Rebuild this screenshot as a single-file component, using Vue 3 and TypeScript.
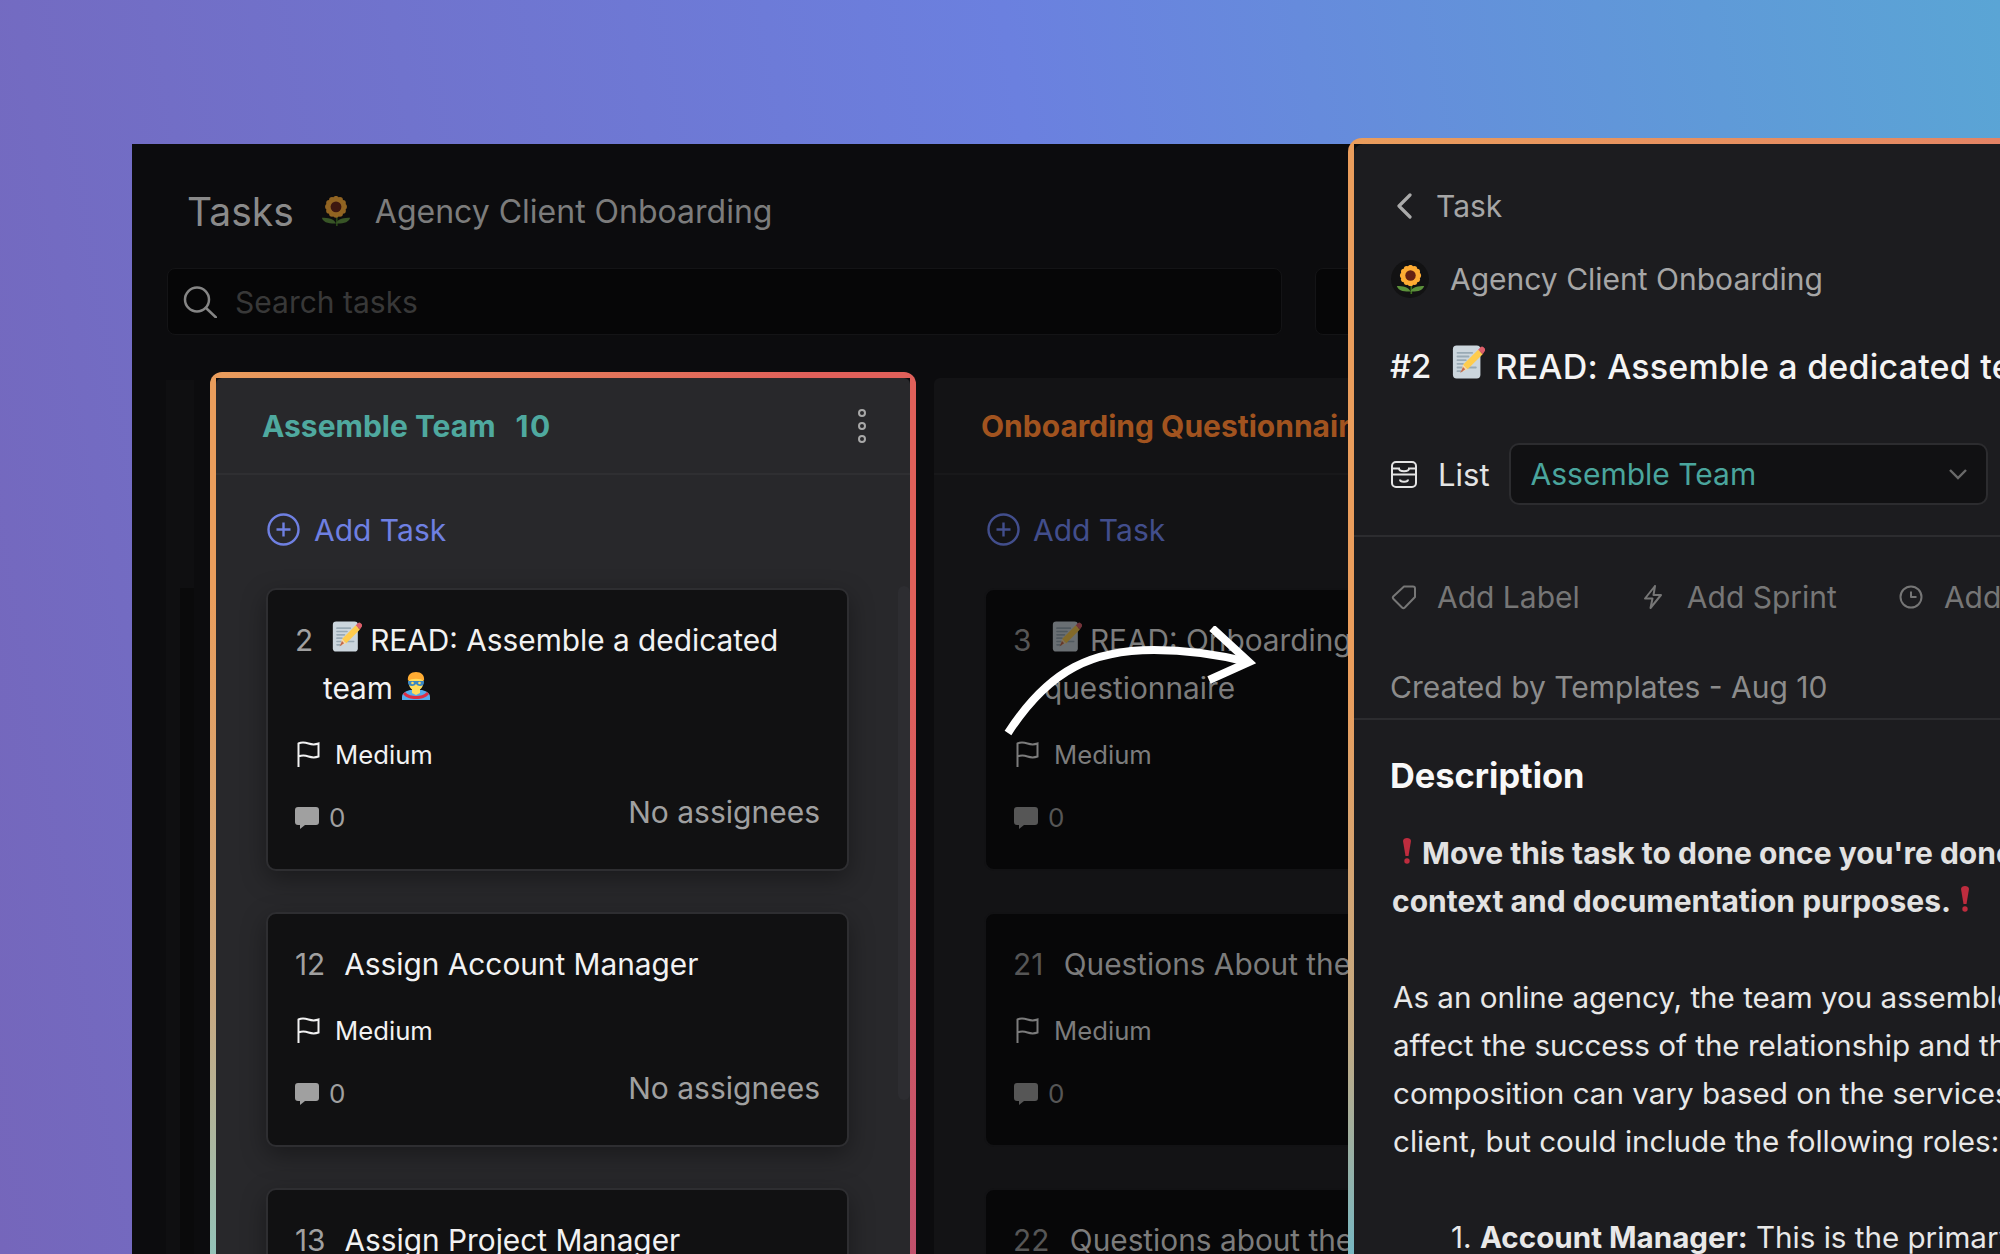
<template>
  <div class="page">
    <svg class="sprite" aria-hidden="true">
      <symbol id="memo" viewBox="0 0 36 36">
        <path fill="#ccd6dd" d="M31 32a4 4 0 0 1-4 4H5a4 4 0 0 1-4-4V4a4 4 0 0 1 4-4h22a4 4 0 0 1 4 4z" />
        <path
          fill="none"
          stroke="#99aab5"
          stroke-width="2"
          stroke-linecap="round"
          d="M6 8h16M6 12h12M6 16h9M6 20h6M6 24h20M6 28h5"
        />
        <path fill="#ffcc4d" d="M12 21 28.500 4.500l5 5L17 26z" />
        <path fill="#dd5f6a" d="M28.500 4.500 31 2a2.500 2.500 0 0 1 3.500 0l1 1a2.500 2.500 0 0 1 0 3.500l-2 3z" />
        <path fill="#ffd9a0" d="m12 21 5 5-7 3z" />
        <path fill="#c1694f" d="m12 23.500 2.500 2.500L9 30z" />
      </symbol>
      <symbol id="hero" viewBox="0 0 30 28">
        <path fill="#55acee" d="M1 28v-3c0-4 4-6 8-7h12c4 1 8 3 8 7v3z" />
        <path fill="#dd2e44" d="M4 20c3 3 7 4 11 4s8-1 11-4l2 2c-3 4-8 5-13 5S5 26 2 22z" />
        <path fill="#ffdc5d" d="M11 15h8v6l-4 2-4-2z" />
        <path fill="#ffdc5d" d="M8 8c0-5 14-5 14 0v4c0 4-4 7-7 7s-7-3-7-7z" />
        <path fill="#ffac33" d="M7 9c-1-6 3-9 8-9s9 3 8 9c-3-3-13-3-16 0z" />
        <path fill="#3b88c3" d="M7 9h16v2c0 2-2 3-4 3-2 0-3-1-4-2-1 1-2 2-4 2-2 0-4-1-4-3z" />
        <circle cx="11.500" cy="11" r="1.300" fill="#ffdc5d" />
        <circle cx="18.500" cy="11" r="1.300" fill="#ffdc5d" />
      </symbol>
      <symbol id="sunflower" viewBox="0 0 36 36">
        <path fill="#3e721d" d="M18 24h2v12h-2z" />
        <path fill="#5c913b" d="M18 33C12 33 3 33 1 26c7 0 15 1 17 7zm0 0c6 0 15 0 17-7-7 0-15 1-17 7z" />
        <circle v-for="p in petals" :key="p.x" :cx="p.x" :cy="p.y" r="3.600" fill="#ffac33" />
        <circle cx="18" cy="13" r="9" fill="#ffac33" />
        <circle cx="18" cy="13" r="6.500" fill="#662113" />
      </symbol>
      <symbol id="bang" viewBox="0 0 10 26">
        <path fill="#be2c3e" d="M1 3c0-4 8-4 8 0L6.500 18h-3z" />
        <circle cx="5" cy="23" r="2.700" fill="#be2c3e" />
      </symbol>
    </svg>

    <div class="window">
      <header class="head">
        <span class="head-title">Tasks</span>
        <svg class="head-flower"><use href="#sunflower" /></svg>
        <span class="head-project">Agency Client Onboarding</span>
      </header>

      <div class="search-row">
        <div class="search">
          <svg width="34" height="32" viewBox="0 0 34 32" fill="none" stroke="#858585" stroke-width="2.500">
            <circle cx="14" cy="13.500" r="12" />
            <path d="m23 22 10 9.500" stroke-linecap="round" />
          </svg>
          <span>Search tasks</span>
        </div>
        <div class="filter"></div>
      </div>

      <div class="board">
        <div class="stub"><div class="stub-card"></div></div>

        <section
          v-for="col in columns"
          :key="col.name"
          class="column"
          :class="{ active: col.active, dim: !col.active }"
        >
          <div class="column-inner">
            <div class="column-head">
              <span class="column-name">{{ col.name }}</span>
              <span v-if="col.count" class="column-count">{{ col.count }}</span>
              <svg v-if="col.active" class="kebab" width="10" height="36" viewBox="0 0 10 36">
                <circle cx="5" cy="5" r="3" />
                <circle cx="5" cy="18" r="3" />
                <circle cx="5" cy="31" r="3" />
              </svg>
            </div>

            <div class="add-task">
              <svg width="33" height="33" viewBox="0 0 33 33" fill="none" stroke="currentColor" stroke-width="2.400">
                <circle cx="16.500" cy="16.500" r="15" />
                <path d="M16.500 9.500v14M9.500 16.500h14" />
              </svg>
              <span>Add Task</span>
            </div>

            <article v-for="task in col.tasks" :key="task.id" class="card">
              <div class="card-title">
                <span class="card-num">{{ task.id }}</span>
                <svg v-if="task.memo" class="memo"><use href="#memo" /></svg>
                <span>{{ task.title }}</span>
                <svg v-if="task.hero" class="hero"><use href="#hero" /></svg>
              </div>
              <div class="card-priority">
                <svg width="23" height="26" viewBox="0 0 23 26" fill="none" stroke="currentColor" stroke-width="2">
                  <path d="M1.500 26V2.500c4-2 7-1 10 0s6 1.500 10 0v13c-4 1.500-7 1-10 0s-6-1.500-10 0" />
                </svg>
                <span>Medium</span>
              </div>
              <div class="card-foot">
                <svg width="24" height="22" viewBox="0 0 24 22" fill="currentColor">
                  <path d="M3 0h18a3 3 0 0 1 3 3v12a3 3 0 0 1-3 3H10l-5 4v-4H3a3 3 0 0 1-3-3V3a3 3 0 0 1 3-3z" />
                </svg>
                <span class="card-count">0</span>
                <span class="card-assignee">No assignees</span>
              </div>
            </article>
          </div>
          <div v-if="col.active" class="scroll-track"></div>
        </section>
      </div>
    </div>

    <svg class="arrow" width="270" height="130" viewBox="0 0 270 130" fill="none" stroke="#fff" stroke-width="8">
      <path d="M10 107C52 42 96 24 156 24c32 0 62 4 94 12" />
      <path d="M214 2l37 34-40 18" />
    </svg>

    <aside class="panel">
      <div class="panel-inner">
        <div class="back">
          <svg width="16" height="26" viewBox="0 0 16 26" fill="none" stroke="#aaa" stroke-width="3.200" stroke-linecap="round" stroke-linejoin="round">
            <path d="M14 2 3 13l11 11" />
          </svg>
          <span>Task</span>
        </div>
        <div class="project">
          <span class="project-badge"><svg><use href="#sunflower" /></svg></span>
          <span>Agency Client Onboarding</span>
        </div>
        <h1 class="panel-title">
          <span class="panel-num">#2</span>
          <svg class="panel-memo"><use href="#memo" /></svg>
          <span class="panel-name">READ: Assemble a dedicated team</span>
        </h1>
        <div class="list-row">
          <svg width="26" height="27" viewBox="0 0 26 27" fill="none" stroke="#e4e4e4" stroke-width="2">
            <rect x="1" y="1" width="24" height="25" rx="4" />
            <path d="M1 13.500h24M1 7.500h7c0 3.500 10 3.500 10 0h7M9 18.500c0 3 8 3 8 0" />
          </svg>
          <span class="list-label">List</span>
          <div class="select">
            <span>Assemble Team</span>
            <svg width="18" height="11" viewBox="0 0 18 11" fill="none" stroke="#6a6a6a" stroke-width="2.400">
              <path d="m1 1 8 8 8-8" />
            </svg>
          </div>
        </div>

        <div class="attrs">
          <div v-for="attr in attrs" :key="attr.label" class="attr">
            <svg width="26" height="26" viewBox="0 0 26 26" fill="none" stroke="#767676" stroke-width="2" stroke-linejoin="round">
              <path :d="attr.icon" />
            </svg>
            <span>{{ attr.label }}</span>
          </div>
        </div>

        <div class="created">Created by Templates - Aug 10</div>

        <div class="description">
          <h2>Description</h2>
          <p class="strong">
            <svg class="bang first"><use href="#bang" /></svg>Move this task to done once you're done reading it<br />
            context and documentation purposes.<svg class="bang last"><use href="#bang" /></svg>
          </p>
          <p v-for="line in bodyLines" :key="line" class="line">{{ line }}</p>
          <p class="line item">1. <b>Account Manager:</b> This is the primary point of contact</p>
        </div>
      </div>
    </aside>
  </div>
</template>

<script setup lang="ts">
interface Task {
  id: number
  title: string
  memo?: boolean
  hero?: boolean
}

interface Column {
  name: string
  count?: number
  active?: boolean
  tasks: Task[]
}

const petals = Array.from({ length: 12 }, (_, i) => {
  const a = (i / 12) * Math.PI * 2
  return { x: 18 + Math.cos(a) * 9.5, y: 13 + Math.sin(a) * 9.5 }
})

const columns: Column[] = [
  {
    name: 'Assemble Team',
    count: 10,
    active: true,
    tasks: [
      { id: 2, title: 'READ: Assemble a dedicated team', memo: true, hero: true },
      { id: 12, title: 'Assign Account Manager' },
      { id: 13, title: 'Assign Project Manager' },
    ],
  },
  {
    name: 'Onboarding Questionnaire',
    tasks: [
      { id: 3, title: 'READ: Onboarding questionnaire', memo: true },
      { id: 21, title: 'Questions About the Client' },
      { id: 22, title: 'Questions about the Project' },
    ],
  },
]

const attrs = [
  {
    label: 'Add Label',
    icon: 'M13 2.500h9a2 2 0 0 1 2 2V13L13.800 23.500a2 2 0 0 1-2.800 0l-8.500-8.500a2 2 0 0 1 0-2.800zM19.500 6.500v.1',
  },
  { label: 'Add Sprint', icon: 'M14 2 4 14.500h7.500L9.500 24 20 11h-7.500z' },
  { label: 'Add Date', icon: 'M13 2.500a10.500 10.500 0 1 0 0 21 10.500 10.500 0 0 0 0-21zM13 7.500V13h5.500' },
]

const bodyLines = [
  'As an online agency, the team you assemble for each',
  'affect the success of the relationship and the project',
  'composition can vary based on the services you offer',
  'client, but could include the following roles:',
]
</script>

<style>
html,
body {
  margin: 0;
  overflow: hidden;
}
</style>

<style scoped>
.page {
  position: relative;
  box-sizing: border-box;
  width: 2000px;
  height: 1254px;
  padding: 144px 0 0 132px;
  overflow: hidden;
  background: linear-gradient(80deg, #7566bb 0%, #6b80df 55%, #5aa5d5 100%);
  font-family: Inter, "Liberation Sans", sans-serif;
}

.sprite {
  display: none;
}

.window {
  height: 100%;
  overflow: hidden;
  background: #0c0c0e;
}

.head {
  display: flex;
  align-items: center;
  height: 44px;
  padding: 45px 0 2px 55px;
}

.head-title {
  font-size: 39px;
  color: #8a8a8a;
}

.head-flower {
  width: 30px;
  height: 30px;
  margin: 0 24px 0 27px;
  opacity: 0.55;
}

.head-project {
  font-size: 32px;
  color: #7c7c7c;
}

.search-row {
  display: flex;
  gap: 33px;
  margin: 33px 0 0 35px;
}

.search {
  display: flex;
  flex: 0 0 1115px;
  box-sizing: border-box;
  align-items: center;
  gap: 18px;
  height: 67px;
  padding-left: 15px;
  border: 1px solid #141416;
  border-radius: 8px;
  background: #060607;
  font-size: 30px;
  color: #383838;
}

.filter {
  flex: 0 0 300px;
  box-sizing: border-box;
  border: 1px solid #141416;
  border-radius: 8px;
  background: #060607;
}

.board {
  display: flex;
  gap: 12px;
  height: 900px;
  margin: 37px 0 0 34px;
}

.stub {
  flex: 0 0 28px;
  margin: 8px 4px 0 0;
  background: #0f0f11;
}

.stub-card {
  width: 14px;
  height: 800px;
  margin: 208px 0 0 14px;
  background: #0a0a0b;
}

.column {
  --col-bg: #131315;
  --card-bg: #070708;
  --card-line: #121214;
  --title: #7c7c7c;
  --muted: #565656;
  --blue: #424e8c;
  position: relative;
  flex: 0 0 706px;
  box-sizing: border-box;
  padding: 6px;
  border-radius: 12px;
}

.column.active {
  --col-bg: #28282b;
  --card-bg: #111112;
  --card-line: #2e2e31;
  --title: #f2f2f2;
  --muted: #a0a0a0;
  --blue: #6f80e2;
  background:
    linear-gradient(90deg, #e99d5c, #e0605a 85%) top / 100% 6px no-repeat,
    linear-gradient(180deg, #e99d5c 25%, #c8a880 70%, #90c4bc 100%) left / 6px 100% no-repeat,
    linear-gradient(180deg, #e0605a 30%, #c0506c 100%) right / 6px 100% no-repeat;
}

.column-inner {
  height: 100%;
  padding-right: 61px;
  border-radius: 6px;
  background: var(--col-bg);
}

.column-head {
  display: flex;
  align-items: center;
  gap: 20px;
  height: 95px;
  padding-left: 46px;
  margin-right: -61px;
  border-bottom: 2px solid #2f2f32;
  font-size: 30px;
  font-weight: 700;
  white-space: nowrap;
  color: #4fa99f;
}

.column-count {
  letter-spacing: 1.500px;
}

.dim .column-head {
  padding-left: 47px;
  color: #a1531f;
  border-color: #18181a;
}

.kebab {
  margin-left: auto;
  margin-right: 43px;
  fill: #28282b;
  stroke: #a8a8a8;
  stroke-width: 2;
}

.add-task {
  display: flex;
  align-items: center;
  gap: 14px;
  height: 33px;
  margin: 38px 0 42px 51px;
  font-size: 30px;
  color: var(--blue);
}

.dim .add-task {
  gap: 13px;
  margin-left: 53px;
}

.card {
  box-sizing: border-box;
  margin: 0 0 41px 50px;
  padding: 26px 27px 36px;
  border: 2px solid var(--card-line);
  border-radius: 10px;
  background: var(--card-bg);
}

.active .card {
  box-shadow: 0 8px 24px rgba(0, 0, 0, 0.35);
}

.card-title {
  padding-left: 28px;
  text-indent: -28px;
  font-size: 29.800px;
  line-height: 48px;
  color: var(--title);
}

.dim .card-title {
  padding-left: 31px;
  text-indent: -31px;
}

.card-num {
  margin-right: 19px;
  color: var(--muted);
}

.dim .card-num {
  margin-right: 20.500px;
}

.memo {
  width: 30px;
  height: 31px;
  margin-right: 8px;
  vertical-align: -1px;
}

.hero {
  width: 30px;
  height: 28px;
  margin-left: 8px;
  vertical-align: -1px;
}

.dim .memo {
  opacity: 0.5;
}

.card-priority {
  display: flex;
  align-items: center;
  gap: 15px;
  height: 26px;
  margin: 29px 0 0 2px;
  font-size: 25.700px;
  color: var(--title);
}

.dim .card-priority {
  margin-left: 3px;
}

.card-foot {
  display: flex;
  align-items: center;
  height: 30px;
  margin: 36px 0 0;
  font-size: 26px;
  color: var(--muted);
}

.dim .card-foot {
  margin-left: 1px;
}

.card-count {
  margin: 0 0 2px 10px;
}

.card-assignee {
  margin: 0 0 12px auto;
  font-size: 30px;
}

.scroll-track {
  position: absolute;
  top: 214px;
  right: 6px;
  width: 12px;
  height: 514px;
  border-radius: 6px;
  background: #2d2d31;
}

.arrow {
  position: absolute;
  left: 998px;
  top: 626px;
}

.panel {
  position: absolute;
  top: 138px;
  left: 1348px;
  box-sizing: border-box;
  width: 800px;
  height: 1200px;
  padding: 6px 0 0 6px;
  border-radius: 14px 0 0 0;
  background:
    linear-gradient(90deg, #ea9d5c, #e58a62 70%, #e0766a) top / 100% 6px no-repeat,
    linear-gradient(180deg, #ea9d5c 45%, #c2aa84 75%, #6fb8c8 95%) left / 6px 100% no-repeat;
}

.panel-inner {
  height: 100%;
  box-sizing: border-box;
  padding: 44px 0 0 37px;
  border-radius: 9px 0 0 0;
  background: #1c1c1f;
  white-space: nowrap;
}

.back {
  display: flex;
  align-items: center;
  gap: 24px;
  height: 36px;
  margin-left: 5px;
  font-size: 30px;
  color: #a6a6a6;
}

.project {
  display: flex;
  align-items: center;
  gap: 21px;
  height: 36px;
  margin-top: 37px;
  font-size: 30px;
  color: #a6a6a6;
}

.project-badge {
  display: flex;
  align-items: center;
  justify-content: center;
  width: 38px;
  height: 38px;
  border-radius: 50%;
  background: #121213;
}

.project-badge svg {
  width: 29px;
  height: 29px;
}

.panel-title {
  display: flex;
  align-items: center;
  height: 48px;
  margin: 45px 0 0 -1px;
  font-size: 33px;
  font-weight: 500;
  color: #f4f4f4;
}

.panel-num {
  margin-right: 21px;
}

.panel-name {
  font-size: 34px;
  letter-spacing: 0.200px;
}

.panel-memo {
  width: 33px;
  height: 34px;
  margin: -8px 10px 0 0;
}

.list-row {
  display: flex;
  align-items: center;
  height: 62px;
  margin: 53px 0 0 -37px;
  padding: 0 0 30px 37px;
  border-bottom: 2px solid #2c2c2f;
  font-size: 30px;
}

.list-label {
  margin: 0 19px 0 21px;
  font-size: 31px;
  color: #e4e4e4;
}

.select {
  display: flex;
  flex: 0 0 479px;
  box-sizing: border-box;
  align-items: center;
  justify-content: space-between;
  height: 62px;
  padding: 0 19px 0 20px;
  border: 2px solid #2c2c2f;
  border-radius: 10px;
  background: #111113;
  color: #4aa59d;
}

.attrs {
  display: flex;
  align-items: center;
  gap: 61px;
  height: 36px;
  margin-top: 42px;
  font-size: 30px;
  color: #767676;
}

.attr {
  display: flex;
  align-items: center;
  gap: 20px;
}

.created {
  height: 36px;
  margin: 54px 0 0 -37px;
  padding: 0 0 13px 36px;
  border-bottom: 2px solid #2c2c2f;
  font-size: 30px;
  line-height: 36px;
  color: #8c8c8c;
}

.description {
  margin: 36px 0 0 -1px;
}

.description h2 {
  height: 40px;
  margin: 0;
  font-size: 34.400px;
  font-weight: 700;
  line-height: 40px;
  color: #f8f8f8;
}

.strong {
  margin: 32.500px 0 48px 2px;
  font-size: 30px;
  font-weight: 700;
  line-height: 48px;
  color: #e2e2e2;
}

.bang {
  width: 10px;
  height: 26px;
}

.bang.first {
  margin: 0 10px 0 10px;
}

.bang.last {
  margin-left: 9px;
  vertical-align: 0;
}

.line {
  margin: 0 0 0 3px;
  font-size: 29.600px;
  line-height: 48px;
  color: #e8e8e8;
}

.item {
  margin: 48px 0 0 61px;
}
</style>
